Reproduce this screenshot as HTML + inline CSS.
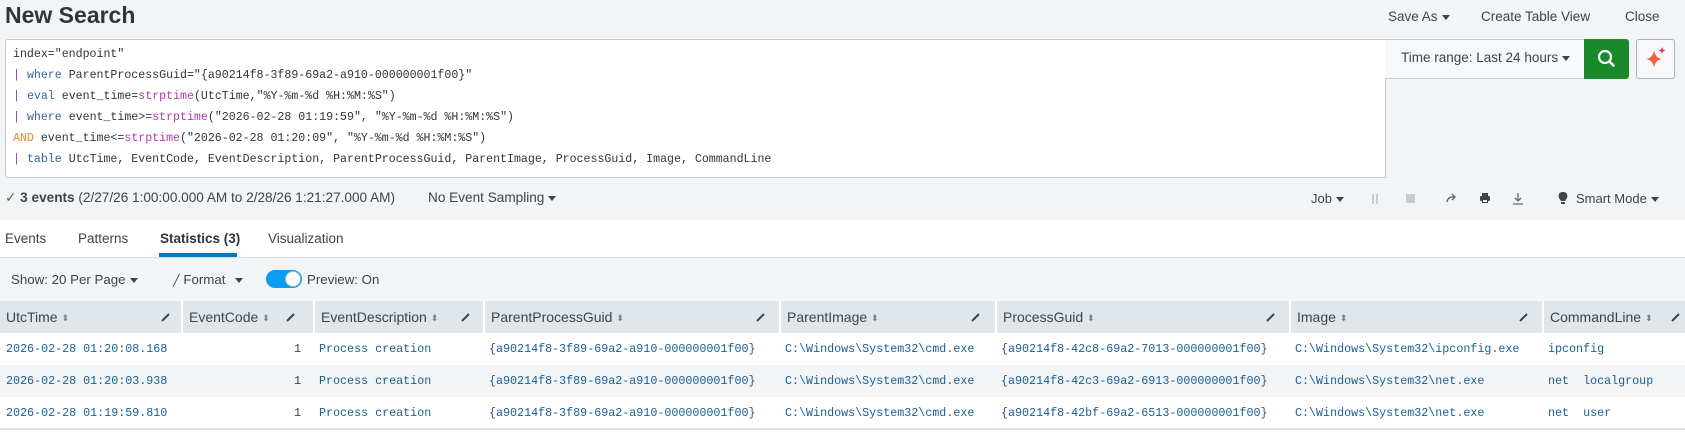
<!DOCTYPE html>
<html><head><meta charset="utf-8"><style>
*{margin:0;padding:0;box-sizing:border-box}
body{width:1685px;height:435px;background:#f2f4f5;font-family:"Liberation Sans",sans-serif;color:#3c444d;position:relative;overflow:hidden}
.a{position:absolute;white-space:nowrap}
.mono{font-family:"Liberation Mono","DejaVu Sans Mono",monospace}
.car{display:inline-block;width:0;height:0;border-left:4px solid transparent;border-right:4px solid transparent;border-top:5px solid #3c444d;vertical-align:middle;margin-left:4px}
.code{font-size:11.6px;line-height:21px;color:#2e3540}
.kw{color:#3863a0}.fn{color:#b03bb0}.pp{color:#7a4fa8}.and{color:#f58220}
.row{position:absolute;left:0;width:1685px;height:32px}
.hd{background:#e1e6eb}
.cell{position:absolute;top:0;height:100%;font-size:11.7px;line-height:32px;color:#1a5f96;padding-left:6px}
.hcell{position:absolute;top:0;height:32px;font-size:14px;line-height:32px;color:#3c444d;padding-left:6px;border-left:2px solid #fff}
.srt{font-size:9px;color:#7a838c;margin-left:4px;vertical-align:1px}
.pen{position:absolute;top:10px;width:12px;height:12px}
</style></head><body>
<div class="a" style="left:0;top:430px;width:1685px;height:5px;background:#fff"></div>
<div class="a" style="left:5px;top:2px;font-size:23px;color:#2e3540;font-weight:bold">New Search</div>
<div class="a" style="left:1388px;top:9px;font-size:13.5px">Save As<span class="car"></span></div>
<div class="a" style="left:1481px;top:9px;font-size:13.5px">Create Table View</div>
<div class="a" style="left:1625px;top:9px;font-size:13.5px">Close</div>

<div class="a" style="left:5px;top:39px;width:1381px;height:139px;background:#fff;border:1px solid #c3cbd4;border-radius:3px 0 0 3px"></div>
<div class="a code mono" style="left:13px;top:44px">
<div>index="endpoint"</div>
<div><span class="pp">|</span> <span class="kw">where</span> ParentProcessGuid="{a90214f8-3f89-69a2-a910-000000001f00}"</div>
<div><span class="pp">|</span> <span class="kw">eval</span> event_time=<span class="fn">strptime</span>(UtcTime,"%Y-%m-%d %H:%M:%S")</div>
<div><span class="pp">|</span> <span class="kw">where</span> event_time&gt;=<span class="fn">strptime</span>("2026-02-28 01:19:59", "%Y-%m-%d %H:%M:%S")</div>
<div><span class="and">AND</span> event_time&lt;=<span class="fn">strptime</span>("2026-02-28 01:20:09", "%Y-%m-%d %H:%M:%S")</div>
<div><span class="pp">|</span> <span class="kw">table</span> UtcTime, EventCode, EventDescription, ParentProcessGuid, ParentImage, ProcessGuid, Image, CommandLine</div>
</div>
<div class="a" style="left:1385px;top:39px;width:200px;height:40px;background:#f7f8fa;border:1px solid #c3cbd4;border-left:none"></div>
<div class="a" style="left:1401px;top:50px;font-size:13.5px">Time range: Last 24 hours<span class="car"></span></div>
<div class="a" style="left:1584px;top:39px;width:45px;height:40px;background:#1a8929;border-radius:0 3px 3px 0">
<svg width="45" height="40"><circle cx="21" cy="18" r="6" fill="none" stroke="#fff" stroke-width="2.2"/><line x1="25.5" y1="22.5" x2="29.5" y2="26.5" stroke="#fff" stroke-width="2.4" stroke-linecap="round"/></svg></div>
<div class="a" style="left:1636px;top:39px;width:39px;height:40px;background:#f7f8fa;border:1px solid #a9b2bb;border-radius:3px">
<svg width="37" height="38"><path d="M17 10 Q18 18 25 19 Q18 20 17 28 Q16 20 9 19 Q16 18 17 10Z" fill="#f4603a"/><path d="M25 7 l1 2.5 2.5 1 -2.5 1 -1 2.5 -1 -2.5 -2.5 -1 2.5 -1z" fill="#e8304a"/></svg></div>

<div class="a" style="left:5px;top:190px;font-size:13.6px"><span style="color:#1a8929">✓</span> <b>3 events</b> (2/27/26 1:00:00.000 AM to 2/28/26 1:21:27.000 AM)</div>
<div class="a" style="left:428px;top:190px;font-size:13.6px">No Event Sampling<span class="car"></span></div>
<div class="a" style="left:1311px;top:191px;font-size:13px">Job<span class="car"></span></div>
<div class="a" style="left:1372px;top:194px;width:2px;height:10px;background:#c3cbd4"></div>
<div class="a" style="left:1376px;top:194px;width:2px;height:10px;background:#c3cbd4"></div>
<div class="a" style="left:1406px;top:194px;width:9px;height:9px;background:#c3cbd4"></div>
<svg class="a" style="left:1445px;top:192px" width="12" height="12"><path d="M2 10 Q3 4 10 5 M7 2 L10 5 L7 8" fill="none" stroke="#5c6773" stroke-width="1.4"/></svg>
<svg class="a" style="left:1479px;top:192px" width="12" height="12"><rect x="3" y="1" width="6" height="3" fill="#3c444d"/><rect x="1" y="4" width="10" height="5" rx="1" fill="#3c444d"/><rect x="3" y="8" width="6" height="3" fill="#3c444d"/><rect x="4" y="8" width="4" height="2" fill="#fff"/></svg>
<svg class="a" style="left:1512px;top:192px" width="12" height="13"><path d="M6 1 V9 M3 6 L6 9 L9 6 M1 12 H11" fill="none" stroke="#5c6773" stroke-width="1.3"/></svg>
<svg class="a" style="left:1558px;top:191px" width="10" height="15"><path d="M5 1 C1 1 0 4 1 7 L3 10 H7 L9 7 C10 4 9 1 5 1Z" fill="#3c444d"/><rect x="3" y="11" width="4" height="2" fill="#3c444d"/></svg>
<div class="a" style="left:1576px;top:191px;font-size:13px">Smart Mode<span class="car"></span></div>

<div class="a" style="left:0;top:220px;width:1685px;height:38px;background:#fff;border-bottom:1px solid #dce1e6"></div>
<div class="a" style="left:5px;top:231px;font-size:13.5px">Events</div>
<div class="a" style="left:78px;top:231px;font-size:13.5px">Patterns</div>
<div class="a" style="left:160px;top:231px;font-size:13.5px;font-weight:bold;color:#2e3540">Statistics (3)</div>
<div class="a" style="left:268px;top:231px;font-size:13.5px">Visualization</div>
<div class="a" style="left:159px;top:253px;width:78px;height:4px;background:#0877be"></div>

<div class="a" style="left:11px;top:272px;font-size:13.3px">Show: 20 Per Page<span class="car"></span></div>
<div class="a" style="left:173px;top:272px;font-size:13.3px"><span style="font-size:11px">╱</span> Format <span class="car" style="margin-left:6px"></span></div>
<div class="a" style="left:266px;top:270px;width:36px;height:18px;border-radius:9px;background:#0b9cf1"><div style="position:absolute;right:1px;top:1px;width:16px;height:16px;border-radius:8px;background:#fff;border:1px solid #8ca"></div></div>
<div class="a" style="left:307px;top:272px;font-size:13.3px">Preview: On</div>

<div class="row hd" style="top:301px">
<div class="hcell" style="left:0;border-left:none">UtcTime<span class="srt">⬍</span></div>
<div class="hcell" style="left:181px">EventCode<span class="srt">⬍</span></div>
<div class="hcell" style="left:313px">EventDescription<span class="srt">⬍</span></div>
<div class="hcell" style="left:483px">ParentProcessGuid<span class="srt">⬍</span></div>
<div class="hcell" style="left:779px">ParentImage<span class="srt">⬍</span></div>
<div class="hcell" style="left:995px">ProcessGuid<span class="srt">⬍</span></div>
<div class="hcell" style="left:1289px">Image<span class="srt">⬍</span></div>
<div class="hcell" style="left:1542px">CommandLine<span class="srt">⬍</span></div>
<svg class="pen" style="left:160px" viewBox="0 0 12 12"><path d="M2 10 L9 3" stroke="#3c444d" stroke-width="2"/></svg>
<svg class="pen" style="left:285px" viewBox="0 0 12 12"><path d="M2 10 L9 3" stroke="#3c444d" stroke-width="2"/></svg>
<svg class="pen" style="left:460px" viewBox="0 0 12 12"><path d="M2 10 L9 3" stroke="#3c444d" stroke-width="2"/></svg>
<svg class="pen" style="left:755px" viewBox="0 0 12 12"><path d="M2 10 L9 3" stroke="#3c444d" stroke-width="2"/></svg>
<svg class="pen" style="left:970px" viewBox="0 0 12 12"><path d="M2 10 L9 3" stroke="#3c444d" stroke-width="2"/></svg>
<svg class="pen" style="left:1265px" viewBox="0 0 12 12"><path d="M2 10 L9 3" stroke="#3c444d" stroke-width="2"/></svg>
<svg class="pen" style="left:1518px" viewBox="0 0 12 12"><path d="M2 10 L9 3" stroke="#3c444d" stroke-width="2"/></svg>
<svg class="pen" style="left:1670px" viewBox="0 0 12 12"><path d="M2 10 L9 3" stroke="#3c444d" stroke-width="2"/></svg>
</div>

<div class="row mono" style="top:333px;background:#fff">
<div class="cell" style="left:0">2026-02-28 01:20:08.168</div>
<div class="cell" style="left:181px;width:132px;text-align:right;padding-right:12px;color:#3c444d">1</div>
<div class="cell" style="left:313px">Process creation</div>
<div class="cell" style="left:483px">{a90214f8-3f89-69a2-a910-000000001f00}</div>
<div class="cell" style="left:779px">C:\Windows\System32\cmd.exe</div>
<div class="cell" style="left:995px">{a90214f8-42c8-69a2-7013-000000001f00}</div>
<div class="cell" style="left:1289px">C:\Windows\System32\ipconfig.exe</div>
<div class="cell" style="left:1542px">ipconfig</div>
</div>
<div class="row mono" style="top:365px;background:#f2f4f5">
<div class="cell" style="left:0">2026-02-28 01:20:03.938</div>
<div class="cell" style="left:181px;width:132px;text-align:right;padding-right:12px;color:#3c444d">1</div>
<div class="cell" style="left:313px">Process creation</div>
<div class="cell" style="left:483px">{a90214f8-3f89-69a2-a910-000000001f00}</div>
<div class="cell" style="left:779px">C:\Windows\System32\cmd.exe</div>
<div class="cell" style="left:995px">{a90214f8-42c3-69a2-6913-000000001f00}</div>
<div class="cell" style="left:1289px">C:\Windows\System32\net.exe</div>
<div class="cell" style="left:1542px">net&nbsp;&nbsp;localgroup</div>
</div>
<div class="row mono" style="top:397px;background:#fff;border-bottom:2px solid #dce1e6;height:33px">
<div class="cell" style="left:0">2026-02-28 01:19:59.810</div>
<div class="cell" style="left:181px;width:132px;text-align:right;padding-right:12px;color:#3c444d">1</div>
<div class="cell" style="left:313px">Process creation</div>
<div class="cell" style="left:483px">{a90214f8-3f89-69a2-a910-000000001f00}</div>
<div class="cell" style="left:779px">C:\Windows\System32\cmd.exe</div>
<div class="cell" style="left:995px">{a90214f8-42bf-69a2-6513-000000001f00}</div>
<div class="cell" style="left:1289px">C:\Windows\System32\net.exe</div>
<div class="cell" style="left:1542px">net&nbsp;&nbsp;user</div>
</div>
</body></html>
